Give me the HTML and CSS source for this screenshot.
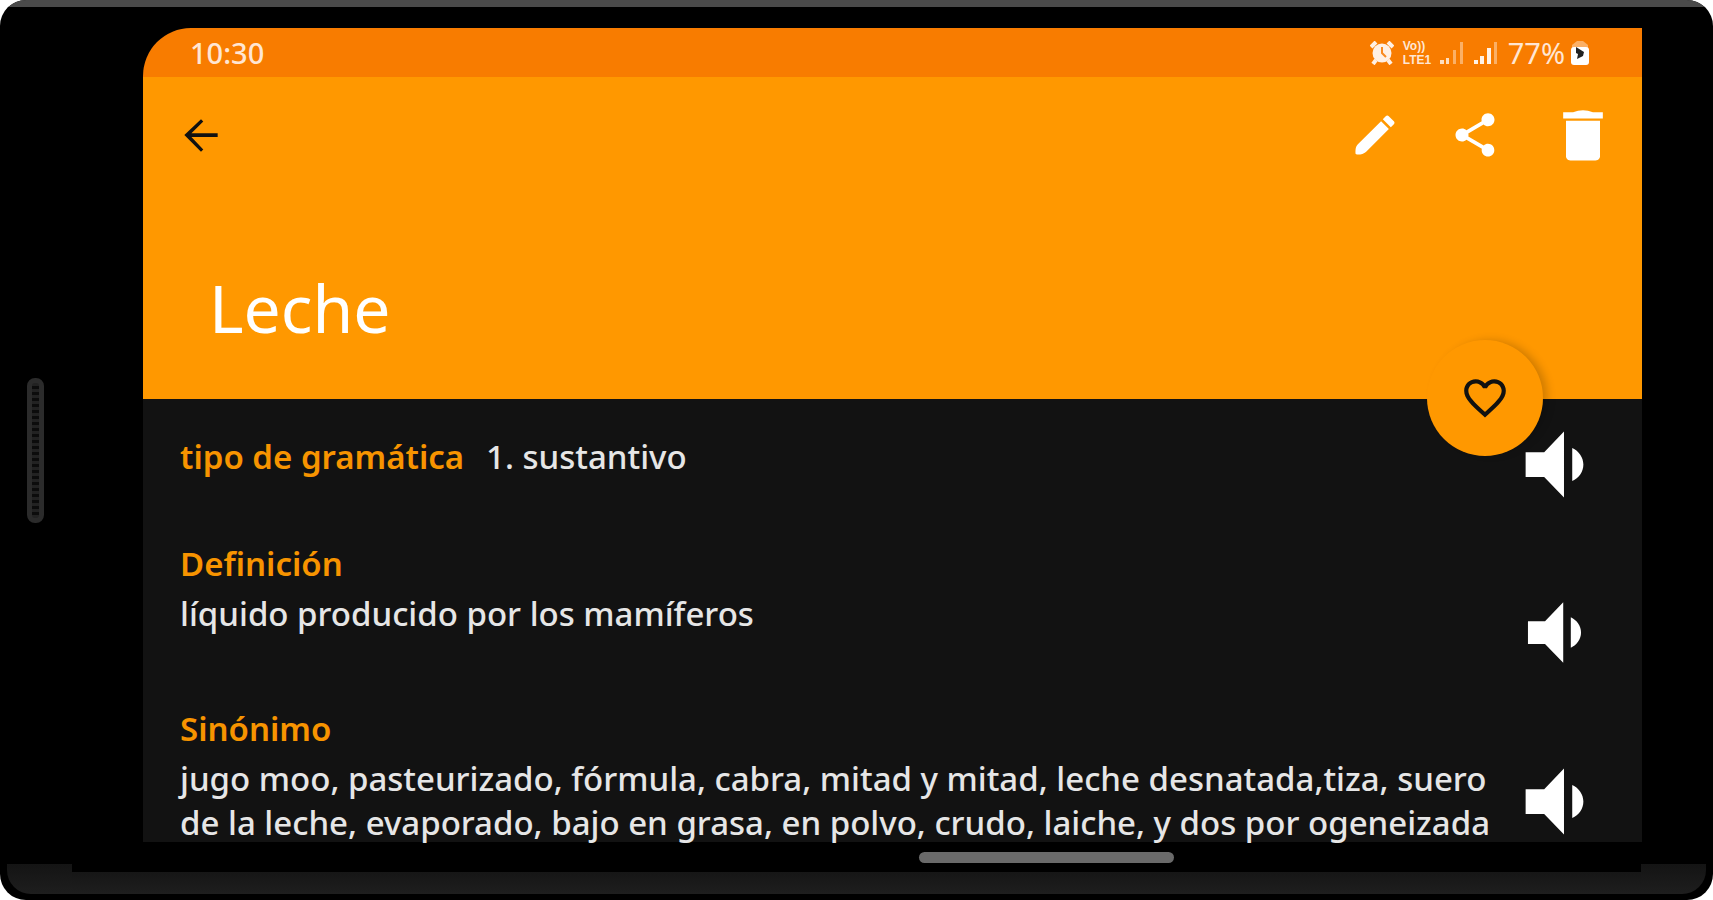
FILE: index.html
```html
<!DOCTYPE html>
<html lang="es">
<head>
    <meta charset="UTF-8">
    <meta name="viewport" content="width=device-width, initial-scale=1.0">
    <title>Leche</title>
    <link rel="stylesheet" href="styles.css">
</head>
<body>

    <div class="phone">
        <div class="phone-edge"></div>

        <div class="phone-body">
            <div class="bezel-left">
                <div class="earpiece"></div>
            </div>

            <main class="screen">
                <div class="status-bar">
                    <span class="clock">10:30</span>
                    <div class="status-icons">
                        <svg class="alarm" viewBox="0 0 24 24">
                            <circle cx="12" cy="12" r="9.5" fill="#fff0e4"/>
                            <path d="M1 6l5-5M23 6l-5-5M6 19l-3 4M18 19l3 4" stroke="#fff0e4" stroke-width="4"/>
                            <path d="M12 6v6l4 4" fill="none" stroke="#f98a20" stroke-width="2"/>
                        </svg>
                        <span class="volte"><span>Vo))</span><span>LTE1</span></span>
                        <svg class="signal" viewBox="0 0 24 24" fill="#fff">
                            <path d="M0 19h4v4H0zM6 17h3v6H6z" opacity=".75"/>
                            <path d="M13 9h3v14h-3zM20 1h3v22h-3z" opacity=".4"/>
                        </svg>
                        <svg class="signal" viewBox="0 0 24 24" fill="#fff">
                            <path d="M0 19h4v4H0zM6 15h4v8H6zM13 7h4v16h-4z" opacity=".9"/>
                            <path d="M20 1h3v22h-3z" opacity=".4"/>
                        </svg>
                        <span class="percent">77%</span>
                        <svg class="battery" viewBox="0 0 20 26">
                            <path d="M2 8V5l5-4h6l5 4v3z" fill="#fff" opacity=".4"/>
                            <rect x="1" y="7" width="18" height="18" rx="3" fill="#fff"/>
                            <path d="M6 7l8 5-1 4-6 3 1-5-2-1z" fill="#222"/>
                        </svg>
                    </div>
                </div>

                <header class="header">
                    <div class="toolbar">
                        <button class="icon-btn back" aria-label="Atrás">
                            <svg viewBox="0 0 24 24"><path d="M20 11.200H7.400l5.700-5.700L12 4.400l-8 7.600 8 8 1.100-1.100L7.400 12.900H20z"/></svg>
                        </button>
                        <div class="actions">
                            <button class="icon-btn" aria-label="Editar">
                                <svg viewBox="0 0 24 24"><path d="M4.200 16.200L14.800 5.600l3.600 3.600L7.800 19.800C6.600 21 3 21.600 3 20.400 3 18.600 3 17.400 4.200 16.200zM20.700 7.050c.4-.4.4-1 0-1.400L18.350 3.300c-.4-.4-1-.4-1.400 0L15.600 4.700l3.700 3.700z"/></svg>
                            </button>
                            <button class="icon-btn" aria-label="Compartir">
                                <svg viewBox="0 0 24 24"><path d="M18 16.080c-.76 0-1.440.3-1.960.77L8.910 12.700c.05-.23.09-.46.09-.7s-.04-.47-.09-.7l7.050-4.110c.54.5 1.250.81 2.040.81 1.660 0 3-1.340 3-3s-1.340-3-3-3-3 1.340-3 3c0 .24.04.47.09.7L8.040 9.810C7.500 9.310 6.790 9 6 9c-1.660 0-3 1.340-3 3s1.340 3 3 3c.79 0 1.500-.31 2.040-.81l7.120 4.160c-.05.21-.08.43-.08.65 0 1.610 1.310 2.920 2.920 2.920s2.920-1.310 2.920-2.920-1.310-2.920-2.920-2.920z"/></svg>
                            </button>
                            <button class="icon-btn delete" aria-label="Eliminar">
                                <svg viewBox="0 0 24 24"><path d="M6 19.500C6 20.500 6.800 21 8 21h8c1.200 0 2-.5 2-1.500V7H6zM19 4h-3.500Q12 2.600 8.500 4H5v2.200h14z"/></svg>
                            </button>
                        </div>
                    </div>
                    <h1>Leche</h1>
                    <button class="fab" aria-label="Favorito">
                        <svg viewBox="0 0 24 24"><path d="M16.500 3c-1.740 0-3.410.81-4.500 2.090C10.910 3.810 9.240 3 7.500 3 4.420 3 2 5.420 2 8.500c0 3.780 3.400 6.860 8.550 11.540L12 21.350l1.450-1.320C18.600 15.360 22 12.280 22 8.500 22 5.420 19.580 3 16.500 3zm-4.400 15.550l-.1.1-.1-.1C7.140 14.240 4 11.390 4 8.500 4 6.500 5.500 5 7.500 5c1.540 0 3.040.99 3.570 2.360h1.870C13.460 5.990 14.960 5 16.500 5c2 0 3.500 1.500 3.500 3.500 0 2.890-3.140 5.740-7.900 10.050z"/></svg>
                    </button>
                </header>

                <div class="content">
                    <!-- Grammar type -->
                    <section class="entry entry-inline">
                        <div class="entry-text">
                            <h2>tipo de gramática</h2>
                            <p>1. sustantivo</p>
                        </div>
                        <button class="speak" aria-label="Escuchar tipo de gramática">
                            <svg viewBox="0 0 24 24"><path d="M19 12c0-1.770-1.100-3.290-2.700-4.030v8.050c1.600-.73 2.700-2.250 2.700-4.020zM5 9v6h4.500l4.800 5V4L9.500 9H5z"/></svg>
                        </button>
                    </section>

                    <!-- Definition -->
                    <section class="entry">
                        <div class="entry-text">
                            <h2>Definición</h2>
                            <p>líquido producido por los mamíferos</p>
                        </div>
                        <button class="speak speak-small" aria-label="Escuchar definición">
                            <svg viewBox="0 0 24 24"><path d="M19 12c0-1.770-1.100-3.290-2.700-4.030v8.050c1.600-.73 2.700-2.250 2.700-4.020zM5 9v6h4.500l4.800 5V4L9.500 9H5z"/></svg>
                        </button>
                    </section>

                    <!-- Synonyms -->
                    <section class="entry">
                        <div class="entry-text">
                            <h2>Sinónimo</h2>
                            <p>jugo moo, pasteurizado, fórmula, cabra, mitad y mitad, leche desnatada,tiza, suero<br>de la leche, evaporado, bajo en grasa, en polvo, crudo, laiche, y dos por ogeneizada</p>
                        </div>
                        <button class="speak" aria-label="Escuchar sinónimo">
                            <svg viewBox="0 0 24 24"><path d="M19 12c0-1.770-1.100-3.290-2.700-4.030v8.050c1.600-.73 2.700-2.250 2.700-4.020zM5 9v6h4.500l4.800 5V4L9.500 9H5z"/></svg>
                        </button>
                    </section>
                </div>
            </main>

            <div class="bezel-right"></div>
        </div>

        <div class="nav-bar">
            <div class="nav-handle"></div>
        </div>
        <div class="phone-base">
            <div class="base-cap"></div>
            <div class="base-strip"></div>
            <div class="base-cap"></div>
        </div>
    </div>

</body>
</html>
```

FILE: styles.css
```css
* {
    box-sizing: border-box;
}
body {
    margin: 0;
    background: #fff;
    font-family: "Noto Sans", "Open Sans", sans-serif;
    color: #e6e6e6;
}
h1, h2, p {
    margin: 0;
}
button {
    padding: 0;
    border: none;
    background: none;
    cursor: pointer;
}
svg {
    display: block;
}

/* Phone frame */
.phone {
    display: flex;
    flex-direction: column;
    height: 100vh;
    overflow: hidden;
    background: #000;
    border-radius: 26px;
}
.phone-edge {
    height: 7px;
    background: #4a4a4a;
}
.phone-body {
    display: flex;
    flex: 1;
    min-height: 0;
    padding-top: 21px;
}
.bezel-left {
    display: flex;
    align-items: center;
    width: 143px;
    padding-left: 27px;
}
.earpiece {
    width: 17px;
    height: 145px;
    margin-top: 30px;
    border: 5px solid #2b2b2b;
    border-radius: 8px;
    background: repeating-linear-gradient(#222 0 3px, #0c0c0c 3px 6px);
}
.bezel-right {
    width: 71px;
}
.screen {
    display: flex;
    flex: 1;
    flex-direction: column;
    min-width: 0;
    background: #121212;
    border-top-left-radius: 48px;
}

/* Status bar */
.status-bar {
    display: flex;
    align-items: center;
    justify-content: space-between;
    height: 49px;
    padding: 0 52px 0 47px;
    background: #f87c00;
    border-top-left-radius: 48px;
    color: #ffe6d4;
    font-size: 29px;
    line-height: 48px;
}
.clock {
    font-weight: 500;
}
.status-icons {
    display: flex;
    align-items: center;
}
.alarm {
    width: 24px;
    height: 24px;
    margin-right: 9px;
}
.volte {
    display: flex;
    flex-direction: column;
    width: 37px;
    font-family: "Liberation Sans", Arial, sans-serif;
    font-size: 12px;
    font-weight: 700;
    line-height: 14px;
}
.signal {
    width: 24px;
    height: 24px;
    margin-right: 10px;
}
.percent {
    margin-right: 5px;
}
.battery {
    width: 20px;
    height: 26px;
}

/* Orange header */
.header {
    position: relative;
    display: flex;
    flex-direction: column;
    flex-shrink: 0;
    justify-content: space-between;
    height: 322px;
    padding: 24px 25px 48px 33px;
    background: #ff9800;
}
.toolbar {
    display: flex;
    align-items: center;
    justify-content: space-between;
}
.actions {
    display: flex;
    align-items: center;
    gap: 48px;
}
.icon-btn svg {
    width: 52px;
    height: 52px;
    fill: #fff;
}
.icon-btn.back svg {
    width: 50px;
    height: 50px;
    fill: #111;
}
.icon-btn.delete svg {
    width: 68px;
    height: 68px;
}
.header h1 {
    padding-left: 33px;
    color: #fff;
    font-size: 66px;
    font-weight: 400;
    line-height: 88px;
}
.fab {
    position: absolute;
    right: 99px;
    bottom: -57px;
    display: flex;
    align-items: center;
    justify-content: center;
    width: 116px;
    height: 116px;
    border-radius: 50%;
    background: #ff9800;
    box-shadow: 6px -1px 10px -2px rgba(0, 0, 0, 0.2);
}
.fab svg {
    width: 50px;
    height: 50px;
    fill: #111;
}

/* Word details */
.content {
    display: flex;
    flex: 1;
    flex-direction: column;
    gap: 21px;
    min-height: 0;
    padding: 16px 38px 0 37px;
}
.entry {
    display: flex;
    flex-shrink: 0;
    justify-content: space-between;
    min-height: 144px;
}
.entry h2 {
    margin-bottom: 6px;
    color: #f79400;
    font-size: 33px;
    font-weight: 600;
    line-height: 44px;
}
.entry p {
    font-size: 33px;
    font-weight: 500;
    line-height: 44px;
    white-space: nowrap;
}
.entry-inline {
    min-height: 106px;
}
.entry-inline .entry-text {
    display: flex;
    gap: 22px;
    padding-top: 20px;
}
.speak {
    align-self: flex-end;
    flex-shrink: 0;
}
.entry-inline .speak {
    align-self: flex-start;
}
.speak svg {
    width: 99px;
    height: 99px;
    fill: #fff;
}
.speak-small svg {
    width: 91px;
    height: 91px;
    margin: 4px 4px 8px;
}

/* Bottom of the phone */
.nav-bar {
    display: flex;
    align-items: center;
    justify-content: center;
    height: 22px;
    padding: 8px 71px 0 450px;
}
.nav-handle {
    width: 255px;
    height: 11px;
    border-radius: 6px;
    background: #6a6a6a;
}
.phone-base {
    display: flex;
    align-items: flex-end;
    height: 36px;
    padding: 0 7px 6px;
}
.base-cap {
    width: 65px;
    height: 30px;
    background: linear-gradient(#141414, #1e1e1e);
}
.base-cap:first-child {
    border-bottom-left-radius: 24px;
}
.base-cap:last-child {
    border-bottom-right-radius: 24px;
}
.base-strip {
    flex: 1;
    height: 22px;
    background: linear-gradient(#161616, #1e1e1e);
}
```
